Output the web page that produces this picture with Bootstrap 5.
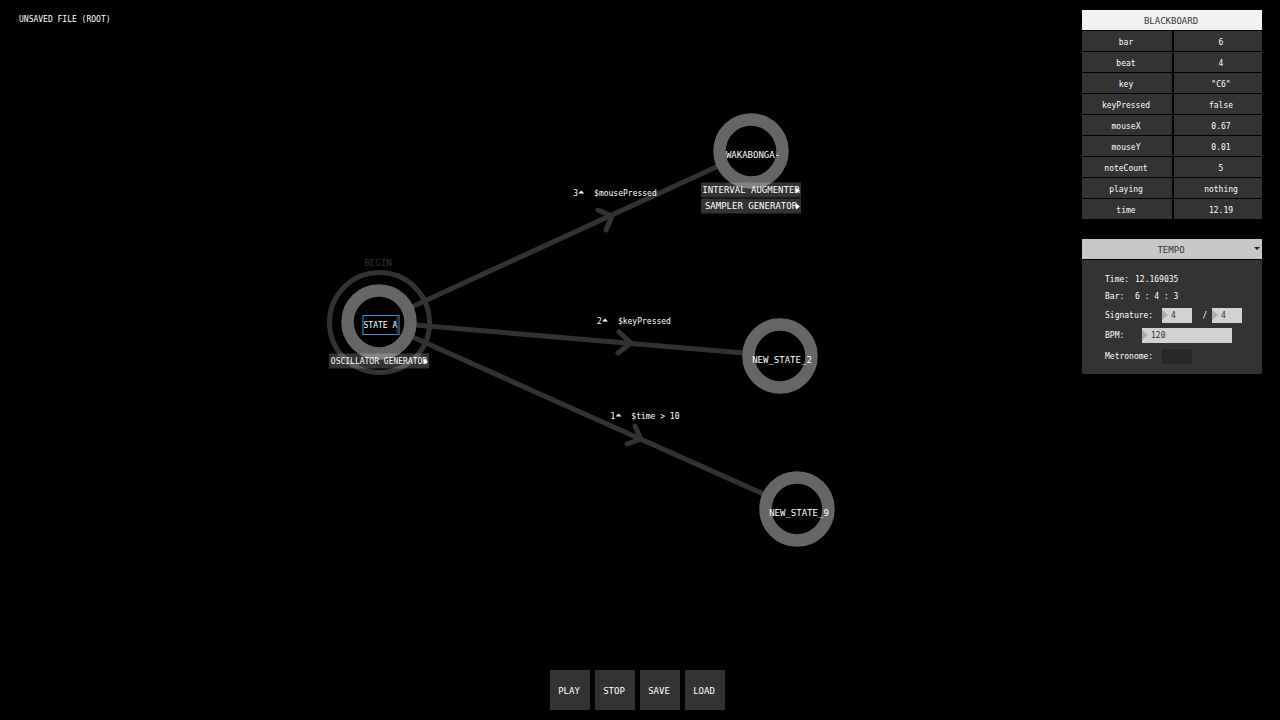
<!DOCTYPE html>
<html lang="en">
<head>
<meta charset="utf-8">
<meta name="viewport" content="width=device-width, initial-scale=1">
<title>State machine editor</title>
<link href="https://cdn.jsdelivr.net/npm/bootstrap@5.3.0/dist/css/bootstrap.min.css" rel="stylesheet">
<style>
  body { background: #000; color: #fff; font-family: "DejaVu Sans Mono", "Liberation Mono", monospace; font-size: 8px; line-height: 15px; }
  button, input { font: inherit; }
  .caps { font-size: 9px; }
  /* free canvas */
  .graph svg.edges { width: 100%; height: 100%; overflow: visible; }
  .pin { position: absolute; transform: translate(-50%, -50%); white-space: nowrap; }
  .state-name { width: 37px; height: 20px; padding: 0; border: 1px solid #3b8fd0; background: transparent; color: #fff; outline: 0; }
  .caret-line { position: absolute; right: 2px; top: 2px; bottom: 2px; width: 1px; background: #555; }
  .start-tag { color: #333; }
  .behaviours { width: 100px; gap: 1px; }
  .behaviour { position: relative; height: 15px; padding: 0; border: 0; background: rgba(255, 255, 255, .2); color: #fff; white-space: nowrap; }
  .behaviour::after { content: ""; position: absolute; right: 1px; top: 5px; border: 3px solid transparent; border-left: 4px solid #fff; border-right: 0; }
  .prio { display: inline-block; margin: 0 10px 2px 0; border: 3px solid transparent; border-bottom-color: #fff; border-top: 0; }
  /* panels */
  .file-title { padding: 12px 0 0 19px; }
  .side { width: 180px; margin: 10px 18px 0 0; gap: 20px; }
  .board { border-collapse: separate; border-spacing: 0; table-layout: fixed; }
  .board th, .board td { height: 21px; padding: 2px 2px 0 0; border-top: 1px solid #000; font-weight: 400; text-align: center; background: #333; line-height: 15px; }
  .board thead th { height: 20px; border: 0; background: #f2f2f2; color: #333; }
  .board tbody td { border-left: 2px solid #000; padding: 2px 0 0 6px; }
  .tempo-head { height: 20px; padding: 2px 2px 0 0; border: 0; background: #c8c8c8; color: #333; margin-bottom: 1px; }
  .tempo-head::after { content: ""; position: absolute; right: 2px; top: 8px; border: 3px solid transparent; border-top-color: #222; border-bottom: 0; }
  .tempo-body { background: #333; padding: 11px 20px 7px 23px; }
  .short-line { height: 17px; }
  .tall-line { height: 20px; }
  .last-line { height: 22px; }
  .w-a { width: 30px; } .w-b { width: 57px; } .w-c { width: 37px; }
  .num { height: 15px; border: 0; border-radius: 0; padding: 0 0 0 9px; background: #d2d2d2; color: #333; outline: 0; }
  .num-wrap { position: relative; height: 15px; }
  .num-wrap::before { content: ""; position: absolute; left: 0; top: 2px; border: 5px solid transparent; border-left: 6px solid #aaa; border-right: 0; }
  .num-s { width: 30px; } .num-l { width: 90px; }
  .slash { width: 20px; padding-left: 6px; text-align: center; }
  .toggle { appearance: none; width: 30px; height: 15px; margin: 0; background: #282828; }
  .transport { gap: 5px; padding: 0 5px 10px 0; }
  .sq { width: 40px; height: 40px; padding: 2px 2px 0 0; border: 0; background: #333; color: #fff; }
</style>
</head>
<body class="min-vh-100 d-flex flex-column position-relative overflow-hidden">

<main class="graph position-absolute top-0 start-0 w-100 h-100">
  <svg class="edges d-block" fill="none" aria-hidden="true">
    <circle cx="379.5" cy="322.5" r="50" stroke="#333" stroke-width="5"/>
    <g stroke="#333" stroke-width="5" stroke-linecap="round" stroke-linejoin="round">
      <path d="M379 322L751 151M379 322L780 356M379 322L797 509"/>
      <path d="M598 210L612 216L606 230M619 332L631 343L618 353M635 426L641 439L627 444"/>
    </g>
    <g stroke="#666" stroke-width="12.5" fill="#000">
      <circle cx="379" cy="322" r="31.5"/>
      <circle cx="751" cy="151" r="31.5"/>
      <circle cx="780" cy="356" r="31.5"/>
      <circle cx="797" cy="509" r="31.5"/>
    </g>
  </svg>

  <span class="pin start-tag caps" style="left:378px;top:263px">BEGIN</span>
  <div class="pin" style="left:381px;top:325px">
    <input class="state-name d-block" type="text" value="STATE A" aria-label="State name"><span class="caret-line"></span>
  </div>
  <div class="pin behaviours d-grid" style="left:379px;top:361px">
    <button class="behaviour" type="button">OSCILLATOR GENERATOR</button>
  </div>

  <span class="pin caps" style="left:753px;top:155px">WAKABONGA-</span>
  <div class="pin behaviours d-grid caps" style="left:751px;top:198px">
    <button class="behaviour" type="button">INTERVAL AUGMENTER</button>
    <button class="behaviour" type="button">SAMPLER GENERATOR</button>
  </div>
  <span class="pin caps" style="left:782px;top:360px">NEW_STATE_2</span>
  <span class="pin caps" style="left:799px;top:513px">NEW_STATE_9</span>

  <span class="pin" style="left:615px;top:193px">3<i class="prio"></i>$mousePressed</span>
  <span class="pin" style="left:634px;top:321px">2<i class="prio"></i>$keyPressed</span>
  <span class="pin" style="left:645px;top:416px">1<i class="prio"></i>$time &gt; 10</span>
</main>

<div class="d-flex justify-content-between align-items-start">
  <div class="file-title position-relative">UNSAVED FILE (ROOT)</div>
  <aside class="side d-flex flex-column position-relative">
    <table class="board w-100">
      <thead><tr><th class="caps" colspan="2" scope="col">BLACKBOARD</th></tr></thead>
      <tbody>
        <tr><th scope="row">bar</th><td>6</td></tr>
        <tr><th scope="row">beat</th><td>4</td></tr>
        <tr><th scope="row">key</th><td>"C6"</td></tr>
        <tr><th scope="row">keyPressed</th><td>false</td></tr>
        <tr><th scope="row">mouseX</th><td>0.67</td></tr>
        <tr><th scope="row">mouseY</th><td>0.01</td></tr>
        <tr><th scope="row">noteCount</th><td>5</td></tr>
        <tr><th scope="row">playing</th><td>nothing</td></tr>
        <tr><th scope="row">time</th><td>12.19</td></tr>
      </tbody>
    </table>
    <section>
      <button class="tempo-head caps position-relative d-block w-100" type="button">TEMPO</button>
      <div class="tempo-body">
        <div class="short-line d-flex align-items-center"><span class="w-a">Time:</span><span>12.169035</span></div>
        <div class="short-line d-flex align-items-center"><span class="w-a">Bar:</span><span>6 : 4 : 3</span></div>
        <div class="tall-line d-flex align-items-center">
          <label class="w-b" for="beats">Signature:</label>
          <span class="num-wrap d-flex"><input class="num num-s" id="beats" type="text" value="4"></span>
          <span class="slash">/</span>
          <span class="num-wrap d-flex"><input class="num num-s" type="text" value="4" aria-label="Beat unit"></span>
        </div>
        <div class="tall-line d-flex align-items-center">
          <label class="w-c" for="bpm">BPM:</label>
          <span class="num-wrap d-flex"><input class="num num-l" id="bpm" type="text" value="120"></span>
        </div>
        <div class="last-line d-flex align-items-center">
          <label class="w-b" for="metro">Metronome:</label>
          <input class="toggle" id="metro" type="checkbox">
        </div>
      </div>
    </section>
  </aside>
</div>

<footer class="transport caps d-flex justify-content-center mt-auto position-relative">
  <button class="sq" type="button">PLAY</button>
  <button class="sq" type="button">STOP</button>
  <button class="sq" type="button">SAVE</button>
  <button class="sq" type="button">LOAD</button>
</footer>

<script src="https://cdn.jsdelivr.net/npm/bootstrap@5.3.0/dist/js/bootstrap.bundle.min.js"></script>
</body>
</html>
